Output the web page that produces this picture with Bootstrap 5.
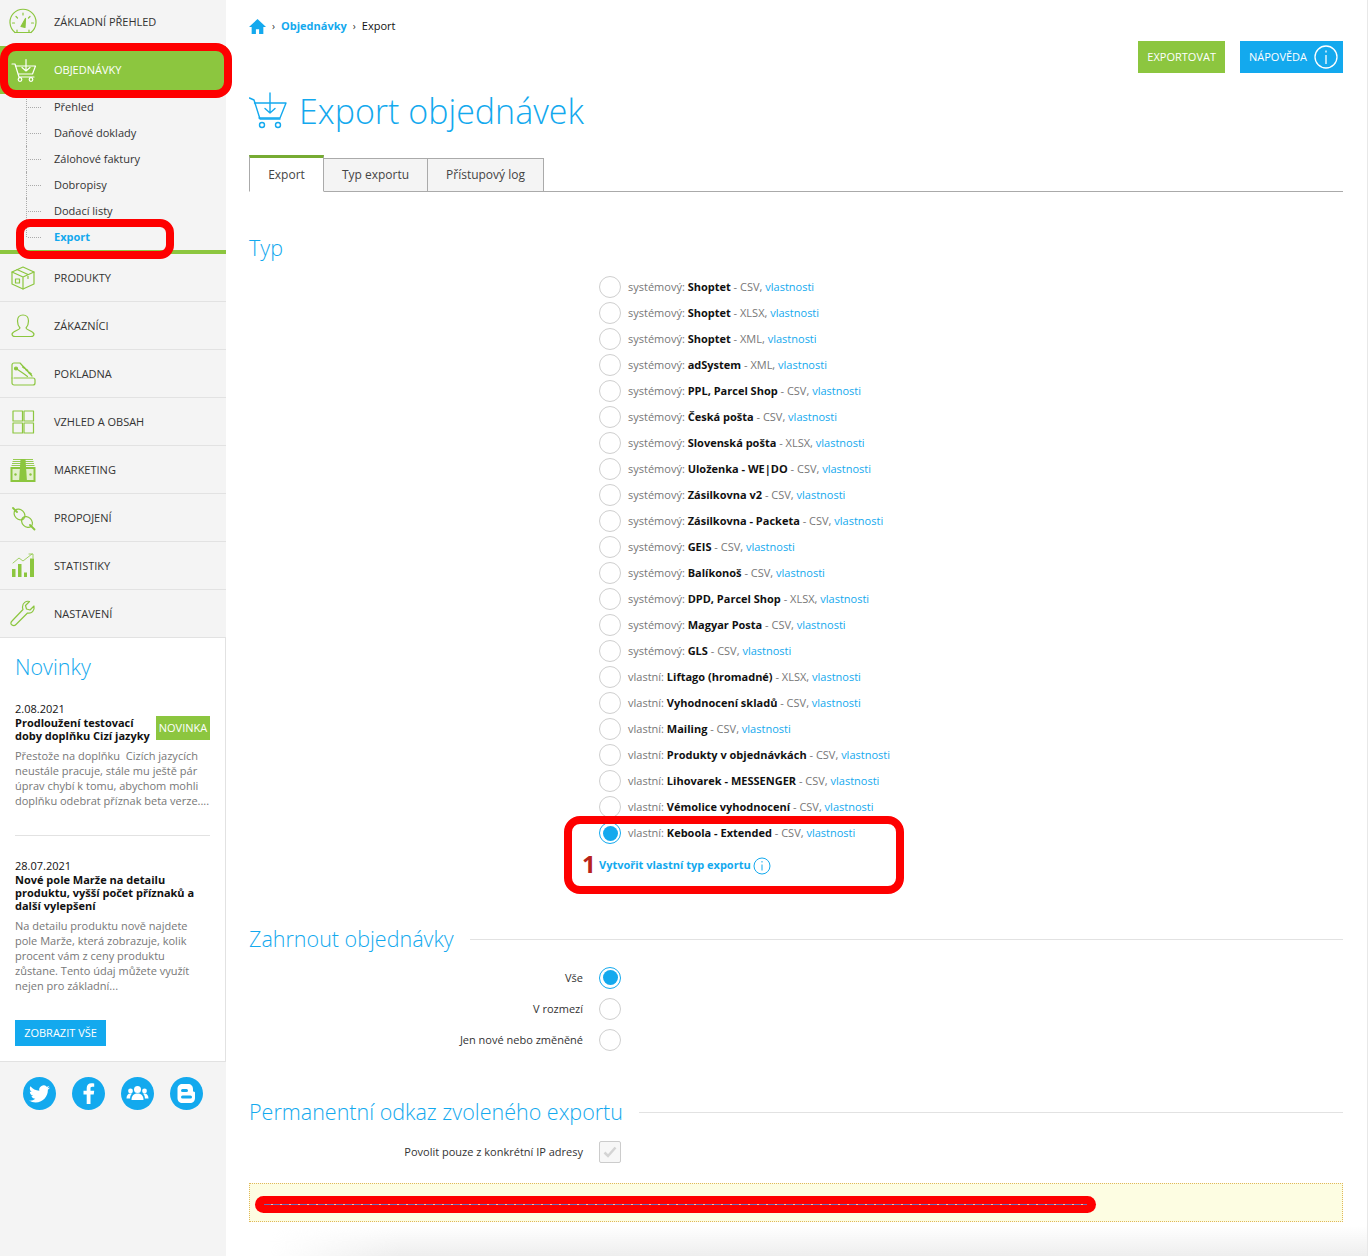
<!DOCTYPE html>
<html lang="cs">

<head>
    <meta charset="UTF-8">
    <meta name="viewport" content="width=device-width, initial-scale=1.0">
    <title>Export objednávek</title>
    <link href="https://cdn.jsdelivr.net/npm/bootstrap@5.3.3/dist/css/bootstrap.min.css" rel="stylesheet">
    <style>
        html, body { height: 1256px; overflow: hidden; }
        body { font-family: "Open Sans", "Liberation Sans", sans-serif; font-size: 11px; color: #333; position: relative; background: #fff; }
        a { color: #13a9ee; text-decoration: none; }
        .page-wrap { height: 1256px; }
        .side { width: 226px; flex: none; background: #f4f4f4; }
        .side-row { height: 48px; border-bottom: 1px solid #e2e2e2; color: #333; padding-top: 1px; }
        .side-row svg { width: 28px; height: 28px; margin: 0 17px 0 9px; flex: none; fill: none; stroke: #8cc63f; stroke-width: 1.2; stroke-linecap: round; stroke-linejoin: round; }
        .side-row.first { height: 46px; border: 0; padding: 0 0 2px; }
        .side-row.on { background: #8cc63f; color: #fff; border: 0; padding: 0; }
        .side-row.on svg { stroke: #fff; }
        .sub-list { list-style: none; margin: 0; padding: 0 0 0 26px; border-bottom: 4px solid #8cc63f; height: 160px; }
        .sub-list li { height: 26px; line-height: 26px; padding-left: 27px; position: relative; border-left: 1px dotted #aaa; }
        .sub-list li:last-child { border-left-color: transparent; }
        .sub-list li:last-child::after { content: ""; position: absolute; left: -1px; top: 0; height: 13px; border-left: 1px dotted #aaa; }
        .sub-list li::before { content: ""; position: absolute; left: 1px; top: 13px; width: 13px; border-top: 1px dotted #aaa; }
        .sub-list a { color: #333; }
        .sub-list a.cur { color: #13a9ee; font-weight: 700; }
        .news { background: #fff; height: 424px; border-right: 1px solid #e2e2e2; border-bottom: 1px solid #e2e2e2; padding: 14px 15px 0; }
        .news-h { font-size: 21.5px; font-weight: 300; color: #13a9ee; line-height: 30px; margin: 0 0 20px; }
        .news-date { color: #111; font-size: 11px; line-height: 14px; }
        .news-title { font-weight: 700; color: #111; line-height: 13px; font-size: 11px; }
        .news-tag { width: 54px; height: 24px; line-height: 24px; text-align: center; flex: none; background: #8cc63f; color: #fff; font-size: 11px; margin-top: -2px; }
        .news-text { color: #777; line-height: 15px; margin-top: 6px; }
        .news-rule { border-top: 1px solid #e2e2e2; margin: 27px 0 23px; width: 195px; }
        .more-btn { background: #13a9ee; color: #fff; width: 91px; height: 26px; line-height: 26px; text-align: center; margin-top: 27px; display: block; }
        .social { gap: 16px; padding: 15px 0 0 23px; }
        .social svg { width: 33px; height: 33px; flex: none; }
        .main-col { flex: 1; padding: 0 24px 0 23px; min-width: 0; border-right: 1px solid #e8e8e8; }
        .crumbs { height: 41px; padding-top: 11px; line-height: 18px; color: #111; gap: 5px; }
        .crumbs a { font-weight: 700; }
        .crumbs svg { width: 17px; height: 17px; fill: #13a9ee; }
        .crumbs span.sep { color: #333; font-size: 10px; margin: 0 1px; }
        .act-btn { height: 32px; color: #fff; border: 0; border-radius: 0; font-size: 11px; padding: 0 9px; display: flex; align-items: center; }
        .act-green { background: #8cc63f; }
        .act-blue { background: #13a9ee; padding-right: 5px; }
        .act-blue svg { width: 24px; height: 24px; margin-left: 7px; }
        .act-btn:hover { color: #fff; }
        .page-head { height: 76px; margin-bottom: 6px; gap: 12px; }
        .page-head svg { width: 38px; height: 38px; fill: none; stroke: #13a9ee; stroke-width: 1.4; stroke-linecap: round; stroke-linejoin: round; }
        .page-head h1 { font-size: 34px; font-weight: 300; color: #13a9ee; margin: 0; line-height: 40px; }
        .tabs-x { height: 37px; border-bottom: 1px solid #aaa; align-items: flex-end; flex-wrap: nowrap; font-size: 12px; }
        .tabs-x .nav-link { height: 34px; line-height: 31px; padding: 0; text-align: center; border-radius: 0; border: 1px solid #aaa; border-left: 0; background: #f4f4f4; color: #444; margin: 0 0 -1px; }
        .tabs-x .nav-link.active { height: 37px; line-height: 34px; width: 75px; border: 1px solid #aaa; border-top: 3px solid #76ab32; border-bottom-color: #fff; background: #fff; color: #444; }
        .tab-b { width: 104px; }
        .tab-c { width: 116px; }
        .sect-h { font-size: 21.5px; font-weight: 300; color: #13a9ee; line-height: 30px; margin: 0; height: 30px; white-space: nowrap; }
        .sect-rule { flex: 1; border-top: 1px solid #e2e2e2; margin-left: 16px; }
        .type-list { margin: 11px 0 0 350px; }
        .type-row { height: 26px; gap: 7px; color: #777; }
        .type-row b { color: #111; }
        .dot { width: 22px; height: 22px; border: 1.5px solid #cfcfcf; border-radius: 50%; flex: none; background: #fff; display: block; }
        .dot.sel { border-color: #13a9ee; position: relative; }
        .dot.sel::after { content: ""; position: absolute; inset: 2.5px; border-radius: 50%; background: #13a9ee; }
        .new-type { height: 26px; margin: 6px 0 0 350px; gap: 2px; font-weight: 700; }
        .new-type svg { width: 18px; height: 18px; margin-top: 2px; }
        .opt-row { height: 31px; gap: 16px; color: #333; }
        .opt-lab { width: 334px; text-align: right; padding-top: 2px; }
        .tick-box { width: 22px; height: 22px; border: 1.5px solid #ccc; border-radius: 2px; flex: none; background: #f7f7f7; }
        .link-box { height: 39px; margin-top: 16px; background: #fdfde2; border: 1px dotted #e0b85a; }
        .mark-box { position: absolute; border: 8px solid #fe0000; pointer-events: none; }
        .mark-a { left: 0; top: 43px; width: 232px; height: 55px; border-radius: 16px; }
        .mark-b { left: 16px; top: 219px; width: 158px; height: 40px; border-radius: 14px; }
        .mark-c { left: 564px; top: 816px; width: 340px; height: 78px; border-radius: 16px; }
        .mark-pill { position: absolute; left: 255px; top: 1196px; width: 841px; height: 17px; border-radius: 9px; background: #fe0000; }
        .mark-pill::after { content: ""; position: absolute; left: 9px; right: 9px; top: 8px; height: 1px; background: repeating-linear-gradient(to right, #6a6fb5 0 7px, #f5c0b0 7px 9px); }
        .mark-num { position: absolute; left: 582px; top: 849px; font-size: 24px; line-height: 30px; font-weight: 700; color: #b8231a; }
        .bottom-shade { position: absolute; left: 270px; right: 1px; top: 1226px; height: 30px; background: linear-gradient(to bottom, rgba(238, 238, 238, 0), #eee); -webkit-mask-image: linear-gradient(to right, transparent, #000 130px); mask-image: linear-gradient(to right, transparent, #000 130px); pointer-events: none; }
    </style>
</head>

<body>
    <div class="page-wrap d-flex">
        <div class="side">
            <a class="side-row first d-flex align-items-center" href="#">
                <svg viewBox="0 0 28 28"><path d="M6 24.500a13 13 0 1 1 16 0"/><path d="M6 24.500h16"/><path d="M14 5v2M7 8.500l1.500 1.500M21 8.500L19.500 10M3.500 15h2M22.500 15h2"/><path d="M12 18.500l4.500-8-.5 9z" fill="#8cc63f"/><path d="M8 24v-2M20 24v-2"/></svg>
                ZÁKLADNÍ PŘEHLED
            </a>
            <a class="side-row on d-flex align-items-center" href="#">
                <svg viewBox="0 0 28 28"><path d="M3 8h3l4 13h15"/><path d="M6.500 10h20l-3 8H9.500"/><path d="M17 3.500V15M13 11.500l4 3.500 4-3.500"/><circle cx="11" cy="23.500" r="1.800"/><circle cx="22" cy="23.500" r="1.800"/></svg>
                OBJEDNÁVKY
            </a>
            <ul class="sub-list">
                <li><a href="#">Přehled</a></li>
                <li><a href="#">Daňové doklady</a></li>
                <li><a href="#">Zálohové faktury</a></li>
                <li><a href="#">Dobropisy</a></li>
                <li><a href="#">Dodací listy</a></li>
                <li><a class="cur" href="#">Export</a></li>
            </ul>
            <a class="side-row d-flex align-items-center" href="#">
                <svg viewBox="0 0 28 28"><path d="M14 3l11 5v12l-11 5-11-5V8z"/><path d="M3 8l11 5 11-5M14 13v12M8 5.500l11 5v4"/><rect x="6.500" y="15" width="4" height="4"/></svg>
                PRODUKTY
            </a>
            <a class="side-row d-flex align-items-center" href="#">
                <svg viewBox="0 0 28 28"><path d="M14 3c-3.500 0-5.500 2.500-5.500 6 0 3 1 5.500 2.500 7 0 2-7 2.500-8 6 0 1.500 1 2.500 3 2.500h16c2 0 3-1 3-2.500-1-3.500-8-4-8-6 1.500-1.500 2.500-4 2.500-7 0-3.500-2-6-5.500-6z"/></svg>
                ZÁKAZNÍCI
            </a>
            <a class="side-row d-flex align-items-center" href="#">
                <svg viewBox="0 0 28 28"><path d="M3 18V5c0-1 .8-2 2-2h6l12 13"/><path d="M5 18h19c1 0 2 1 2 2v3c0 1-1 2-2 2H5c-1 0-2-1-2-2v-5"/><circle cx="7" cy="8.500" r="1.500" fill="#8cc63f"/><path d="M8.500 9.500l6 4 4 3"/><path d="M14 7l1.500 1M17 9.500l1.500 1M20 12.500l2 1.500" stroke-width="1.800"/></svg>
                POKLADNA
            </a>
            <a class="side-row d-flex align-items-center" href="#">
                <svg viewBox="0 0 28 28"><rect x="4" y="3" width="9.500" height="10"/><rect x="15" y="3" width="9.500" height="10"/><rect x="4" y="15" width="9.500" height="10"/><rect x="15" y="15" width="9.500" height="10"/></svg>
                VZHLED A OBSAH
            </a>
            <a class="side-row d-flex align-items-center" href="#">
                <svg viewBox="0 0 28 28"><g stroke-width=".9" stroke-linecap="butt"><path d="M4 3.500h20M3.500 5.500h21M3 7.500h22M2.500 9.500h23"/></g><rect x="1.500" y="11" width="25" height="15" fill="#8cc63f" stroke="none"/><rect x="3.500" y="13" width="21" height="11" fill="#e3f0cd" stroke="none"/><path d="M11.500 3h5l1.500 23h-8z" fill="#8cc63f" stroke="none"/><circle cx="6.500" cy="18.500" r="1.200" fill="#8cc63f" stroke="none"/><circle cx="21.500" cy="18.500" r="1.200" fill="#8cc63f" stroke="none"/></svg>
                MARKETING
            </a>
            <a class="side-row d-flex align-items-center" href="#">
                <svg viewBox="0 0 28 28"><path d="M4 4l4 4M21 21l4.500 4.500" stroke-width="1.800"/><ellipse cx="10.500" cy="10.500" rx="6" ry="4.800" transform="rotate(45 10.500 10.500)"/><ellipse cx="18" cy="18" rx="6" ry="4.800" transform="rotate(45 18 18)"/></svg>
                PROPOJENÍ
            </a>
            <a class="side-row d-flex align-items-center" href="#">
                <svg viewBox="0 0 28 28"><path d="M4 11l6-5 4 3 9-7M20 2h4v4" stroke-width=".8"/><path d="M3 17h3.500v8H3zM9 12h3.500v13H9zM15 20.500h3v4.500h-3zM21 6.500h4V25h-4z" fill="#8cc63f" stroke="none"/></svg>
                STATISTIKY
            </a>
            <a class="side-row d-flex align-items-center" href="#">
                <svg viewBox="0 0 28 28"><path d="M25 6l-4 4-3.500-1-1-3.500 4-4c-3.500-1-7 1.500-7 5.500 0 1 .2 1.500.5 2.500L3 21c-1.500 1.500-1.500 3 0 4s2.500 1 4-.5L18.500 13c4 1 7.500-2.500 6.500-7z"/></svg>
                NASTAVENÍ
            </a>
            <div class="news">
                <div class="news-h">Novinky</div>
                <div class="news-date">2.08.2021</div>
                <div class="d-flex align-items-center justify-content-between">
                    <div class="news-title">Prodloužení testovací<br>doby doplňku Cizí jazyky</div>
                    <div class="news-tag">NOVINKA</div>
                </div>
                <div class="news-text">Přestože na doplňku&nbsp; Cizích jazycích neustále pracuje, stále mu ještě pár úprav chybí k tomu, abychom mohli doplňku odebrat příznak beta verze....</div>
                <div class="news-rule"></div>
                <div class="news-date">28.07.2021</div>
                <div class="news-title">Nové pole Marže na detailu produktu, vyšší počet příznaků a další vylepšení</div>
                <div class="news-text">Na detailu produktu nově najdete pole Marže, která zobrazuje, kolik procent vám z ceny produktu zůstane. Tento údaj můžete využít nejen pro základní...</div>
                <a class="more-btn" href="#">ZOBRAZIT VŠE</a>
            </div>
            <div class="social d-flex">
                <svg viewBox="0 0 33 33"><circle cx="16.500" cy="16.500" r="16.500" fill="#13a9ee"/><g transform="translate(6 6.500) scale(.875)"><path fill="#fff" d="M23.953 4.570a10 10 0 0 1-2.825.775 4.958 4.958 0 0 0 2.163-2.723c-.951.555-2.005.959-3.127 1.184a4.920 4.920 0 0 0-8.384 4.482C7.690 8.095 4.067 6.130 1.640 3.162a4.822 4.822 0 0 0-.666 2.475c0 1.710.870 3.213 2.188 4.096a4.904 4.904 0 0 1-2.228-.616v.060a4.923 4.923 0 0 0 3.946 4.827 4.996 4.996 0 0 1-2.212.085 4.936 4.936 0 0 0 4.604 3.417 9.867 9.867 0 0 1-6.102 2.105c-.390 0-.779-.023-1.170-.067a13.995 13.995 0 0 0 7.557 2.209c9.053 0 13.998-7.496 13.998-13.985 0-.210 0-.420-.015-.630A9.935 9.935 0 0 0 24 4.590z"/></g></svg>
                <svg viewBox="0 0 33 33"><circle cx="16.500" cy="16.500" r="16.500" fill="#13a9ee"/><path fill="#fff" d="M18.500 27v-9.500h3.200l.5-3.700h-3.700v-2.200c0-1 .3-1.800 1.700-1.800h2V6.500c-.4 0-1.500-.2-2.800-.2-2.800 0-4.700 1.700-4.700 4.800v2.700h-3.200v3.700h3.200V27z"/></svg>
                <svg viewBox="0 0 33 33"><circle cx="16.500" cy="16.500" r="16.500" fill="#13a9ee"/><g fill="#fff"><circle cx="16.500" cy="12.500" r="3.500"/><path d="M10.500 23c0-4 2-6.500 6-6.500s6 2.500 6 6.500z"/><circle cx="9.500" cy="14" r="2.400"/><path d="M5.500 21.500c0-3 1.300-5 4-5 .6 0 1 .1 1.400.3-1.200 1.200-1.800 2.700-1.800 4.700z"/><circle cx="23.500" cy="14" r="2.400"/><path d="M27.500 21.500c0-3-1.300-5-4-5-.6 0-1 .1-1.400.3 1.200 1.200 1.800 2.700 1.800 4.700z"/></g></svg>
                <svg viewBox="0 0 33 33"><circle cx="16.500" cy="16.500" r="16.500" fill="#13a9ee"/><path fill="#fff" fill-rule="evenodd" d="M12.500 7h5.500c3 0 5 2 5 5v1.500c0 .8.500 1.200 1.200 1.300.6.100.8.500.8 1V21c0 3-2 5-5 5h-7.500c-3 0-5-2-5-5v-9c0-3 2-5 5-5zm0 5a1.300 1.300 0 0 0 0 3h4a1.300 1.300 0 0 0 0-3zm0 6.500a1.300 1.300 0 0 0 0 3h8a1.300 1.300 0 0 0 0-3z"/></svg>
            </div>
        </div>

        <div class="main-col">
            <div class="crumbs d-flex align-items-center">
                <svg viewBox="0 0 16 16"><path d="M8 1L0 8.500h2.500V15h4v-4.500h3V15h4V8.500H16z"/></svg>
                <span class="sep">›</span>
                <a href="#">Objednávky</a>
                <span class="sep">›</span>
                <span>Export</span>
            </div>
            <div class="d-flex justify-content-end" style="gap:15px">
                <a class="btn act-btn act-green" href="#">EXPORTOVAT</a>
                <a class="btn act-btn act-blue" href="#">NÁPOVĚDA
                    <svg viewBox="0 0 24 24" fill="none" stroke="#fff" stroke-width="1.300"><circle cx="12" cy="12" r="11"/><path d="M12 10v9M12 5.500v2"/></svg>
                </a>
            </div>
            <div class="page-head d-flex align-items-center">
                <svg viewBox="0 0 38 38"><path d="M.5 6l4.500 2 6 19h20"/><path d="M5.500 11H37l-6 15H10"/><path d="M21 1v20M16 16.500l5 4.500 5-4.500"/><circle cx="13" cy="33" r="2.500"/><circle cx="29" cy="33" r="2.500"/></svg>
                <h1>Export objednávek</h1>
            </div>
            <ul class="nav tabs-x">
                <li class="nav-item"><a class="nav-link active" href="#">Export</a></li>
                <li class="nav-item"><a class="nav-link tab-b" href="#">Typ exportu</a></li>
                <li class="nav-item"><a class="nav-link tab-c" href="#">Přístupový log</a></li>
            </ul>

            <h2 class="sect-h" style="margin-top:41px">Typ</h2>
            <div class="type-list">
                <div class="type-row d-flex align-items-center"><span class="dot"></span><span>systémový: <b>Shoptet</b> - CSV, <a href="#">vlastnosti</a></span></div>
                <div class="type-row d-flex align-items-center"><span class="dot"></span><span>systémový: <b>Shoptet</b> - XLSX, <a href="#">vlastnosti</a></span></div>
                <div class="type-row d-flex align-items-center"><span class="dot"></span><span>systémový: <b>Shoptet</b> - XML, <a href="#">vlastnosti</a></span></div>
                <div class="type-row d-flex align-items-center"><span class="dot"></span><span>systémový: <b>adSystem</b> - XML, <a href="#">vlastnosti</a></span></div>
                <div class="type-row d-flex align-items-center"><span class="dot"></span><span>systémový: <b>PPL, Parcel Shop</b> - CSV, <a href="#">vlastnosti</a></span></div>
                <div class="type-row d-flex align-items-center"><span class="dot"></span><span>systémový: <b>Česká pošta</b> - CSV, <a href="#">vlastnosti</a></span></div>
                <div class="type-row d-flex align-items-center"><span class="dot"></span><span>systémový: <b>Slovenská pošta</b> - XLSX, <a href="#">vlastnosti</a></span></div>
                <div class="type-row d-flex align-items-center"><span class="dot"></span><span>systémový: <b>Uloženka - WE|DO</b> - CSV, <a href="#">vlastnosti</a></span></div>
                <div class="type-row d-flex align-items-center"><span class="dot"></span><span>systémový: <b>Zásilkovna v2</b> - CSV, <a href="#">vlastnosti</a></span></div>
                <div class="type-row d-flex align-items-center"><span class="dot"></span><span>systémový: <b>Zásilkovna - Packeta</b> - CSV, <a href="#">vlastnosti</a></span></div>
                <div class="type-row d-flex align-items-center"><span class="dot"></span><span>systémový: <b>GEIS</b> - CSV, <a href="#">vlastnosti</a></span></div>
                <div class="type-row d-flex align-items-center"><span class="dot"></span><span>systémový: <b>Balíkonoš</b> - CSV, <a href="#">vlastnosti</a></span></div>
                <div class="type-row d-flex align-items-center"><span class="dot"></span><span>systémový: <b>DPD, Parcel Shop</b> - XLSX, <a href="#">vlastnosti</a></span></div>
                <div class="type-row d-flex align-items-center"><span class="dot"></span><span>systémový: <b>Magyar Posta</b> - CSV, <a href="#">vlastnosti</a></span></div>
                <div class="type-row d-flex align-items-center"><span class="dot"></span><span>systémový: <b>GLS</b> - CSV, <a href="#">vlastnosti</a></span></div>
                <div class="type-row d-flex align-items-center"><span class="dot"></span><span>vlastní: <b>Liftago (hromadné)</b> - XLSX, <a href="#">vlastnosti</a></span></div>
                <div class="type-row d-flex align-items-center"><span class="dot"></span><span>vlastní: <b>Vyhodnocení skladů</b> - CSV, <a href="#">vlastnosti</a></span></div>
                <div class="type-row d-flex align-items-center"><span class="dot"></span><span>vlastní: <b>Mailing</b> - CSV, <a href="#">vlastnosti</a></span></div>
                <div class="type-row d-flex align-items-center"><span class="dot"></span><span>vlastní: <b>Produkty v objednávkách</b> - CSV, <a href="#">vlastnosti</a></span></div>
                <div class="type-row d-flex align-items-center"><span class="dot"></span><span>vlastní: <b>Lihovarek - MESSENGER</b> - CSV, <a href="#">vlastnosti</a></span></div>
                <div class="type-row d-flex align-items-center"><span class="dot"></span><span>vlastní: <b>Vémolice vyhodnocení</b> - CSV, <a href="#">vlastnosti</a></span></div>
                <div class="type-row d-flex align-items-center"><span class="dot sel"></span><span>vlastní: <b>Keboola - Extended</b> - CSV, <a href="#">vlastnosti</a></span></div>
            </div>
            <a class="new-type d-flex align-items-center" href="#">Vytvořit vlastní typ exportu
                <svg viewBox="0 0 18 18" fill="none" stroke="#13a9ee" stroke-width="1"><circle cx="9" cy="9" r="8"/><path d="M9 7.500v6M9 4v1.500"/></svg>
            </a>

            <div class="d-flex align-items-center" style="margin-top:46px">
                <h2 class="sect-h">Zahrnout objednávky</h2>
                <div class="sect-rule"></div>
            </div>
            <div style="margin-top:8px">
                <div class="opt-row d-flex align-items-center"><div class="opt-lab">Vše</div><span class="dot sel"></span></div>
                <div class="opt-row d-flex align-items-center"><div class="opt-lab">V rozmezí</div><span class="dot"></span></div>
                <div class="opt-row d-flex align-items-center"><div class="opt-lab">Jen nové nebo změněné</div><span class="dot"></span></div>
            </div>

            <div class="d-flex align-items-center" style="margin-top:42px">
                <h2 class="sect-h">Permanentní odkaz zvoleného exportu</h2>
                <div class="sect-rule"></div>
            </div>
            <div class="opt-row d-flex align-items-center" style="margin-top:9px">
                <div class="opt-lab">Povolit pouze z konkrétní IP adresy</div>
                <span class="tick-box d-flex align-items-center justify-content-center">
                    <svg width="14" height="12" viewBox="0 0 14 12" fill="none" stroke="#d4d4d4" stroke-width="2.500"><path d="M1.500 6.500l3.500 3.500 7.500-8.500"/></svg>
                </span>
            </div>
            <div class="link-box"></div>
        </div>
    </div>

    <!-- cervene znacky pres obsah -->
    <div class="mark-box mark-a"></div>
    <div class="mark-box mark-b"></div>
    <div class="mark-box mark-c"></div>
    <div class="mark-num">1</div>
    <div class="mark-pill"></div>
    <div class="bottom-shade"></div>

    <script src="https://cdn.jsdelivr.net/npm/bootstrap@5.3.3/dist/js/bootstrap.bundle.min.js"></script>
</body>

</html>
